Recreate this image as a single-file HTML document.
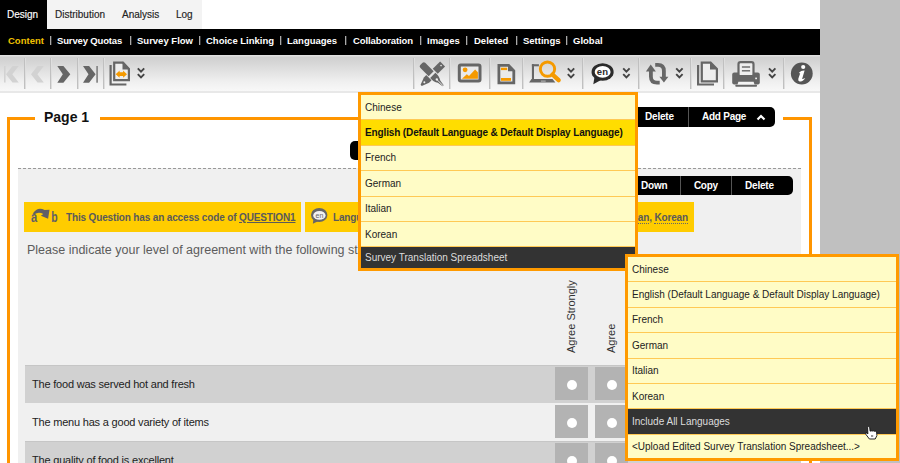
<!DOCTYPE html>
<html><head><meta charset="utf-8">
<style>
*{box-sizing:border-box;margin:0;padding:0}
html,body{width:900px;height:463px;overflow:hidden;background:#fff;font-family:"Liberation Sans",sans-serif}
.a{position:absolute}
#side{left:820px;top:0;width:80px;height:463px;background:#c0c0c0}
#tabs{left:0;top:0;width:202px;height:29px;background:#f3f3f3}
.tab{top:10px;font-size:10px;line-height:10px;color:#222;white-space:nowrap;-webkit-text-stroke:0.15px #222}
#sub{left:0;top:29px;width:820px;height:26px;background:#000}
.sn{top:36px;font-size:9.5px;line-height:10px;font-weight:bold;color:#fff;white-space:nowrap}
.sep{top:36px;width:1px;height:9px;background:#aaa;box-shadow:0.5px 0 0 #666}
#tb{left:0;top:55px;width:820px;height:36px;background:linear-gradient(#e4e4e4 0,#d0d0d0 2.5px,#d4d4d4 6px,#f0f0f0 27px,#f8f8f8 36px)}
#tbl{left:0;top:91px;width:820px;height:2px;background:#e8e8e8}
.ts{top:58px;width:1px;height:31px;background:#c0c0c0;box-shadow:1px 0 0 #dedede}
.frame{background:#ff9500}
#qarea{left:18px;top:168px;width:783px;height:295px;background:#f0f0f0;border-top:1px dashed #999}
.bar{background:#000;border-radius:5px}
.bt{font-size:10px;line-height:10px;font-weight:bold;color:#fff;white-space:nowrap;letter-spacing:-0.2px}
.yb{background:#ffcc00;height:30px!important}
.ybt{font-size:10px;line-height:10px;font-weight:bold;color:#5a5a5a;white-space:nowrap;letter-spacing:-0.15px}
.row{left:25px;width:776px;height:38px}
.rt{font-size:11px;line-height:11px;color:#222;white-space:nowrap;letter-spacing:-0.2px}
.cell{width:33px;height:33px;background:#b3b3b3}
.cell:after{content:"";position:absolute;left:11.5px;top:13px;width:10px;height:10px;border-radius:50%;background:#fff}
.dd{background:#fffcc6;border:3px solid #ff9a00;overflow:hidden}
.di{position:relative;height:25.4px;border-top:1px solid #ffc955;font-size:10px;line-height:10px;color:#222;padding:7.6px 0 0 4px;white-space:nowrap}
.di:first-child{border-top:none;height:24.4px}
.di.sel{background:#ffdd00;font-weight:bold;color:#111;letter-spacing:-0.13px}
.di.dk{background:#333;color:#ddd}
</style></head><body>
<div class="a" id="side"></div>
<div class="a" id="tabs"></div>
<div class="a" style="left:0;top:0;width:47px;height:29px;background:#000"></div>
<div class="a tab" style="left:7px;color:#fff;-webkit-text-stroke:0.15px #fff">Design</div>
<div class="a tab" style="left:55px">Distribution</div>
<div class="a tab" style="left:122px">Analysis</div>
<div class="a tab" style="left:176px">Log</div>

<div class="a" id="sub"></div>
<div class="a sn" style="left:8px;color:#f0c000">Content</div>
<div class="a sep" style="left:50px"></div>
<div class="a sn" style="left:57px;letter-spacing:-0.15px">Survey Quotas</div>
<div class="a sep" style="left:130px"></div>
<div class="a sn" style="left:137px">Survey Flow</div>
<div class="a sep" style="left:199px"></div>
<div class="a sn" style="left:206px">Choice Linking</div>
<div class="a sep" style="left:280px"></div>
<div class="a sn" style="left:287px">Languages</div>
<div class="a sep" style="left:345px"></div>
<div class="a sn" style="left:353px;letter-spacing:-0.1px">Collaboration</div>
<div class="a sep" style="left:420px"></div>
<div class="a sn" style="left:427px">Images</div>
<div class="a sep" style="left:466px"></div>
<div class="a sn" style="left:474px">Deleted</div>
<div class="a sep" style="left:516px"></div>
<div class="a sn" style="left:523px">Settings</div>
<div class="a sep" style="left:566px"></div>
<div class="a sn" style="left:573px">Global</div>

<div class="a" id="tb"></div>
<div class="a" id="tbl"></div>
<div class="a ts" style="left:24px"></div>
<div class="a ts" style="left:50px"></div>
<div class="a ts" style="left:77px"></div>
<div class="a ts" style="left:103px"></div>
<div class="a ts" style="left:413px"></div>
<div class="a ts" style="left:449px"></div>
<div class="a ts" style="left:489px"></div>
<div class="a ts" style="left:522px"></div>
<div class="a ts" style="left:582px"></div>
<div class="a ts" style="left:638px"></div>
<div class="a ts" style="left:690px"></div>
<div class="a ts" style="left:723px"></div>
<div class="a ts" style="left:783px"></div>
<svg class="a" style="left:0;top:0" width="820" height="95" viewBox="0 0 820 95">
<g fill="#d2d2d2"><rect x="4" y="66" width="1.6" height="16.5"/>
<polygon points="12.5,66 18.7,66 12.3,74.2 18.7,82.5 12.5,82.5 6,74.2"/>
<polygon points="37.5,66 43.8,66 37.4,74.2 43.8,82.5 37.5,82.5 31,74.2"/></g>
<g fill="#666"><polygon points="57.3,66 63.4,66 70.3,74.3 63.4,82.7 57.3,82.7 62.8,74.3"/>
<polygon points="83,66 89.1,66 95.6,74.3 89.1,82.7 83,82.7 88.5,74.3"/></g>
<rect x="96.2" y="66" width="1.8" height="16.7" fill="#8a8a8a"/>
<g fill="none" stroke="#666" stroke-width="2.2">
<path d="M110.6 65.1 V84.5 H126.4"/>
<path d="M114.2 62.7 H123 L128.9 69 V80.2 H114.2 Z" fill="#eee"/>
</g>
<polygon points="122.5,61.6 130,69.5 122.5,69.5" fill="#666"/>
<polygon points="115.7,74.2 119.6,70.6 119.6,72.3 123.1,72.3 123.1,70.6 127,74.2 123.1,77.8 123.1,76.1 119.6,76.1 119.6,77.8" fill="#f59a00"/>
<g fill="none" stroke="#444" stroke-width="1.9">
<path d="M137.8 68.4 L141 71.6 L144.2 68.4 M137.8 74.2 L141 77.4 L144.2 74.2"/>
<path d="M567.8 68.4 L571 71.6 L574.2 68.4 M567.8 74.2 L571 77.4 L574.2 74.2"/>
<path d="M623.2 68.4 L626.4 71.6 L629.6 68.4 M623.2 74.2 L626.4 77.4 L629.6 74.2"/>
<path d="M676.2 68.4 L679.4 71.6 L682.6 68.4 M676.2 74.2 L679.4 77.4 L682.6 74.2"/>
<path d="M769 68.4 L772.2 71.6 L775.4 68.4 M769 74.2 L772.2 77.4 L775.4 74.2"/>
</g>
<!-- pen/pencil -->
<g transform="translate(432,74.6) rotate(45)" fill="#666">
<path d="M-15 -1.6 Q-15 -3.5 -13.1 -3.5 L-1.2 -3.5 L-1.2 3.5 L-13.1 3.5 Q-15 3.5 -15 1.6 Z"/>
<path d="M1.1 -3.7 C4.5 -4.1 7.5 -3.2 10 -1.7 L15.8 -0.8 L15.8 0.8 L10 1.7 C7.5 3.2 4.5 4.1 1.1 3.7 Z"/>
<path d="M-3.5 -15 L3.5 -15 L3.5 -4.6 L-3.5 -4.6 Z"/>
<path d="M-3.7 4.4 L3.7 4.4 L3.7 7.8 L0.8 15.3 L-0.8 15.3 L-3.7 7.8 Z"/>
</g>
<g transform="translate(432,74.6) rotate(45)" fill="#eee">
<circle cx="6.8" cy="0" r="1.2"/><rect x="6.8" y="-0.35" width="9" height="0.7"/>
<circle cx="0" cy="-12.8" r="0.8"/>
<circle cx="0" cy="10.8" r="1"/>
</g>
<!-- image -->
<rect x="459.3" y="65" width="20.7" height="16" rx="1.5" fill="#eaeaea" stroke="#666" stroke-width="3"/>
<circle cx="465.1" cy="69.8" r="2.4" fill="#f59a00"/>
<polygon points="462,78.8 466.8,74.2 469,76 475.1,69.4 477.9,72.2 477.9,78.8" fill="#f59a00"/>
<!-- doc -->
<path d="M498.9 65.3 H508.6 L513.8 70.7 V82.9 H498.9 Z" fill="#eaeaea" stroke="#666" stroke-width="2.8"/>
<polygon points="508,63.9 515.2,71.2 508,71.2" fill="#666"/>
<rect x="501" y="67.7" width="6.2" height="2.4" fill="#f59a00"/>
<rect x="501" y="78" width="10" height="2.8" fill="#f59a00"/>
<!-- laptop + magnifier -->
<g fill="#666"><rect x="531.9" y="64.2" width="2.1" height="15"/><rect x="531.9" y="64.2" width="7" height="2.1"/>
<path d="M531.5 79 H552.5 L555.4 82.5 H529.1 Z"/></g>
<rect x="540.9" y="80.6" width="4.8" height="1" fill="#bbb"/>
<circle cx="547.5" cy="69.1" r="7.15" fill="none" stroke="#f59a00" stroke-width="2.9"/>
<path d="M552.5 74.5 L558.6 80.2" stroke="#f59a00" stroke-width="4.4" stroke-linecap="round"/>
<!-- en bubble -->
<ellipse cx="602.6" cy="72" rx="11.05" ry="8.8" fill="#2b2b2b"/>
<path d="M594.5 77 L593.3 84.3 L601 80" fill="#2b2b2b"/>
<ellipse cx="602.65" cy="71.9" rx="7.95" ry="5.85" fill="#fff"/>
<text x="602.4" y="75.3" font-family="Liberation Sans" font-weight="bold" font-size="9.5" text-anchor="middle" fill="#2b2b2b">en</text>
<!-- sync -->
<g fill="#666"><polygon points="645.9,71.5 650.7,64.6 655.9,71.5"/><polygon points="659.4,76.7 668.4,76.7 663.9,82.6"/></g>
<g fill="none" stroke="#666" stroke-width="3.8">
<path d="M650.9 71 V76.5 Q650.9 82.7 657 82.7 H659.7"/>
<path d="M655.2 64.9 H658 Q663.9 64.9 663.9 71 V77"/>
</g>
<!-- copy docs -->
<g fill="none" stroke="#666" stroke-width="2.2">
<path d="M698.1 65.1 V84.5 H714"/>
<path d="M701.8 62.7 H710.6 L716.9 69 V81.3 H701.8 Z" fill="#eee"/>
</g>
<polygon points="710,61.6 718,69.6 710,69.6" fill="#666"/>
<!-- printer -->
<path d="M734.2 72.5 H757.8 Q759.8 72.5 759.8 74.5 V82.6 Q759.8 84.6 757.8 84.6 H734.2 Q732.2 84.6 732.2 82.6 V74.5 Q732.2 72.5 734.2 72.5 Z" fill="#666"/>
<rect x="738.5" y="62.2" width="15" height="14" rx="2" fill="#eee" stroke="#666" stroke-width="2.2"/>
<rect x="741.9" y="66.3" width="8.2" height="1.4" fill="#666"/><rect x="741.9" y="70.1" width="8.2" height="1.4" fill="#666"/>
<rect x="755.2" y="77.6" width="1.8" height="1.6" fill="#eee"/>
<path d="M738.4 81.8 H753.6 L754.6 84.9 H737.4 Z" fill="#f4f4f4"/>
<rect x="735.3" y="84.8" width="21.7" height="1.9" rx="0.8" fill="#666"/>
<!-- info -->
<circle cx="801.8" cy="73.5" r="10.9" fill="#555"/>
<circle cx="803.2" cy="67" r="2.1" fill="#fff"/>
<path d="M798.8 72.9 Q801 70.3 804.6 70.5 L802.1 78.9 Q802.2 79.6 805.2 78 Q803 82 799.6 81.4 Q797.7 80.9 798.3 78.7 L800.2 73.3 Q799.6 73.1 798.8 72.9 Z" fill="#fff"/>
</svg>

<!-- page frame -->
<div class="a frame" style="left:7px;top:117px;width:28px;height:3px"></div>
<div class="a frame" style="left:7px;top:117px;width:3px;height:346px"></div>
<div class="a frame" style="left:100px;top:117px;width:260px;height:3px"></div>
<div class="a frame" style="left:783px;top:117px;width:29px;height:3px"></div>
<div class="a frame" style="left:809px;top:117px;width:3px;height:346px"></div>
<div class="a" style="left:44px;top:110px;font-size:14px;line-height:14px;font-weight:bold;color:#111">Page 1</div>

<div class="a bar" style="left:615px;top:107px;width:160px;height:20px"></div>
<div class="a" style="left:688px;top:107px;width:1px;height:20px;background:#555"></div>
<div class="a bt" style="left:645px;top:112px">Delete</div>
<div class="a bt" style="left:702px;top:112px;letter-spacing:-0.25px">Add Page</div>
<svg class="a" style="left:756px;top:113px" width="10" height="8"><path d="M1.5 6.5 L5 3 L8.5 6.5" fill="none" stroke="#fff" stroke-width="2.2"/></svg>

<div class="a bar" style="left:350px;top:141px;width:60px;height:19px"></div>

<div class="a" id="qarea"></div>
<div class="a bar" style="left:600px;top:176px;width:193px;height:19px"></div>
<div class="a" style="left:680px;top:176px;width:1px;height:19px;background:#555"></div>
<div class="a" style="left:731px;top:176px;width:1px;height:19px;background:#555"></div>
<div class="a bt" style="left:641px;top:181px">Down</div>
<div class="a bt" style="left:694px;top:181px;letter-spacing:-0.35px">Copy</div>
<div class="a bt" style="left:745px;top:181px">Delete</div>

<div class="a yb" style="left:24px;top:202px;width:277px;height:29px"></div>
<div class="a yb" style="left:305px;top:202px;width:389px;height:29px"></div>
<div class="a ybt" style="left:66px;top:212.7px">This Question has an access code of <u>QUESTION1</u></div>
<div class="a ybt" style="left:333px;top:212.7px">Languages: Chinese, English</div>
<div class="a ybt" style="right:212px;top:212.7px">German, <span style="border-bottom:1px dotted #666">Italian</span>, <span style="border-bottom:1px dotted #666">Korean</span></div>
<svg class="a" style="left:0;top:195px" width="340" height="40" viewBox="0 195 340 40">
<path d="M32.8 213.4 Q37.5 206.3 44.6 209.9 L49.5 209.7 L48.1 218.8 L40.9 215.7 L43.3 213.9 Q38.5 211.2 34.4 214.3 Z" fill="#5f5f66"/>
<text x="30.9" y="222" font-family="Liberation Sans" font-weight="bold" font-size="14" fill="#5f5f66" textLength="6.2" lengthAdjust="spacingAndGlyphs">a</text>
<text x="51.2" y="222" font-family="Liberation Sans" font-weight="bold" font-size="14" fill="#5f5f66" textLength="6.4" lengthAdjust="spacingAndGlyphs">b</text>
<ellipse cx="319.2" cy="215" rx="8.2" ry="7" fill="#666"/>
<path d="M313.5 219 L312.8 223.8 L318.5 221" fill="#666"/>
<ellipse cx="319.4" cy="215.4" rx="6.2" ry="4.3" fill="#f2f2f2"/>
<text x="319.4" y="217.6" font-family="Liberation Sans" font-size="7" text-anchor="middle" fill="#666">en</text>
</svg>

<div class="a" style="left:27px;top:244px;font-size:12.5px;line-height:13px;color:#5c5c5c;white-space:nowrap">Please indicate your level of agreement with the following statements</div>

<div class="a" style="left:566px;top:353px;transform-origin:0 0;transform:rotate(-90deg);font-size:11px;line-height:11px;color:#333;white-space:nowrap">Agree Strongly</div>
<div class="a" style="left:606px;top:353px;transform-origin:0 0;transform:rotate(-90deg);font-size:11px;line-height:11px;color:#333;white-space:nowrap">Agree</div>

<div class="a row" style="top:365px;background:#d1d1d1;border-top:1px solid #c6c6c6"></div>
<div class="a rt" style="left:32px;top:379px">The food was served hot and fresh</div>
<div class="a cell" style="left:555px;top:367px"></div>
<div class="a cell" style="left:595px;top:367px"></div>
<div class="a row" style="top:403px;background:#f0f0f0"></div>
<div class="a rt" style="left:32px;top:417px">The menu has a good variety of items</div>
<div class="a cell" style="left:555px;top:405px"></div>
<div class="a cell" style="left:595px;top:405px"></div>
<div class="a row" style="top:441px;background:#d1d1d1;border-top:1px solid #c6c6c6"></div>
<div class="a rt" style="left:32px;top:455px">The quality of food is excellent</div>
<div class="a cell" style="left:555px;top:443px"></div>
<div class="a cell" style="left:595px;top:443px"></div>

<!-- dropdown 1 -->
<div class="a dd" style="left:358px;top:92px;width:280px;height:179px">
<div class="di">Chinese</div>
<div class="di sel">English (Default Language &amp; Default Display Language)</div>
<div class="di">French</div>
<div class="di">German</div>
<div class="di">Italian</div>
<div class="di">Korean</div>
<div class="di dk" style="height:22px;padding-top:5.5px">Survey Translation Spreadsheet</div>
</div>

<!-- dropdown 2 -->
<div class="a dd" style="left:625px;top:254px;width:274px;height:207px">
<div class="di">Chinese</div>
<div class="di">English (Default Language &amp; Default Display Language)</div>
<div class="di">French</div>
<div class="di">German</div>
<div class="di">Italian</div>
<div class="di">Korean</div>
<div class="di dk">Include All Languages</div>
<div class="di">&lt;Upload Edited Survey Translation Spreadsheet...&gt;</div>
</div>
<svg class="a" style="left:860px;top:422px" width="22" height="22" viewBox="860 422 22 22">
<path d="M867.6 427.6 Q868.6 425.6 869.7 427.4 L870.1 431.2 Q871.1 430.3 872.1 431.1 Q873.3 430.3 874.3 431.3 Q875.6 430.8 876.6 431.9 L876.9 435.6 L875.2 439 L869.4 439 L865.8 434.3 Q865.2 432.7 866.8 432.9 L867.9 433.9 Z" fill="#fff" stroke="#111" stroke-width="0.9"/>
<rect x="871" y="435" width="2.2" height="2" fill="#999"/>
</svg>
</body></html>
